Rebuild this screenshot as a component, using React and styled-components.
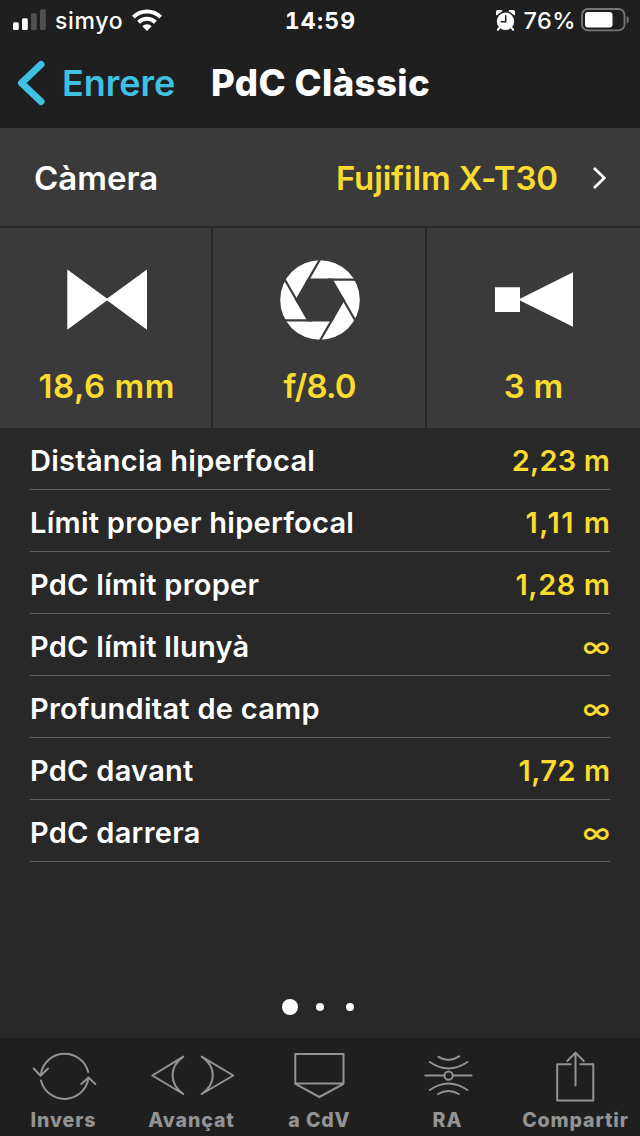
import React from "react";
import styled, { createGlobalStyle } from "styled-components";

const Global = createGlobalStyle`
  *, *::before, *::after { box-sizing: border-box; }
  html, body { margin: 0; padding: 0; background: #282828; }
  body { font-family: Inter, "Liberation Sans", sans-serif; color: #fff; }
  svg { display: block; flex: none; }
`;

const YELLOW = "#fadb2f";
const BLUE = "#3fc1e1";
const PANEL = "#3a3a3a";
const LINE = "#292929";

const Screen = styled.div`
  width: 640px;
  height: 1136px;
  display: flex;
  flex-direction: column;
  background: #282828;
  overflow: hidden;
`;

const Header = styled.header`
  height: 128px;
  background: #1f1f1f;
`;

const Text = styled.span`
  font-size: ${(p) => p.$size}px;
  font-weight: ${(p) => p.$weight || 600};
  letter-spacing: ${(p) => p.$track || 0}px;
  margin-right: ${(p) => -(p.$track || 0)}px;
  color: ${(p) => p.$color || "#fff"};
  font-variant-numeric: ${(p) => (p.$tabular ? "tabular-nums" : "normal")};
  line-height: 1.2;
  white-space: pre;
`;

const StatusBar = styled.div`
  height: 40px;
  display: grid;
  grid-template-columns: 1fr auto 1fr;
  align-items: center;
`;

const StatusText = styled(Text)`
  padding-top: 3px;
`;

const StatusLeft = styled.div`
  display: flex;
  align-items: center;
  padding-left: 13px;
  gap: 9px;
`;

const StatusRight = styled.div`
  display: flex;
  align-items: center;
  justify-content: flex-end;
  padding-right: 11px;
`;

const Percent = styled(StatusText)`
  margin: 0 5px 0 9px;
  padding-top: 2px;
`;

const NavBar = styled.div`
  height: 86px;
  display: flex;
  align-items: center;
  padding-left: 17px;
`;

const NavText = styled(Text)`
  padding-top: 1px;
`;

const BackButton = styled.div`
  display: flex;
  align-items: center;
  gap: 17px;
  width: 194px;
`;

const CameraRow = styled.div`
  height: 100px;
  display: flex;
  align-items: center;
  background: ${PANEL};
  border-bottom: 2px solid ${LINE};
  padding: 4px 33px 0 34px;
`;

const CameraName = styled.div`
  margin-left: auto;
  margin-right: 34px;
  display: flex;
`;

const Tiles = styled.div`
  height: 200px;
  display: grid;
  grid-template-columns: 213px 214px 213px;
  background: ${PANEL};
`;

const Tile = styled.div`
  display: flex;
  flex-direction: column;
  align-items: center;
  padding-top: 27px;
  padding-left: ${(p) => (p.$last ? 0 : 2)}px;
  gap: 22px;
  border-right: ${(p) => (p.$last ? "0" : `2px solid ${LINE}`)};
`;

const Results = styled.div`
  padding: 0 30px;
`;

const ResultRow = styled.div`
  height: 62px;
  display: flex;
  align-items: center;
  justify-content: space-between;
  padding-top: 5px;
  border-bottom: 1px solid #606060;
`;

const Pager = styled.div`
  margin-top: auto;
  height: 62px;
  display: flex;
  align-items: center;
  justify-content: center;
  gap: 22px;
  padding-right: 4px;
`;

const Dot = styled.i`
  width: ${(p) => (p.$active ? 16 : 8)}px;
  height: ${(p) => (p.$active ? 16 : 8)}px;
  border-radius: 50%;
  background: #fff;
  margin-right: ${(p) => (p.$active ? -4 : 0)}px;
`;

const TabBar = styled.nav`
  height: 98px;
  display: grid;
  grid-template-columns: repeat(5, 128px);
  background: #1f1f1f;
`;

const Tab = styled.div`
  display: flex;
  flex-direction: column;
  align-items: center;
  padding-top: 8px;
  gap: 3px;
`;

const TabLabel = styled(Text)`
  padding-right: 2px;
`;

const GREY = "#939393";

function Signal() {
  return (
    <svg width="33" height="22" viewBox="0 0 33 22">
      <rect x="0" y="13.2" width="5.8" height="7.8" rx="1.6" fill="#fff" />
      <rect x="9" y="9.2" width="5.8" height="11.8" rx="1.6" fill="#fff" />
      <rect x="18" y="4.2" width="5.8" height="16.8" rx="1.6" fill="#505050" />
      <rect x="27" y="0.2" width="5.8" height="20.8" rx="1.6" fill="#505050" />
    </svg>
  );
}

function Wifi() {
  return (
    <svg width="30" height="22" viewBox="0 0 30 22">
      <g fill="none" stroke="#fff" strokeWidth="4">
        <path d="M1.4 8.2 A19.3 19.3 0 0 1 28.6 8.2" />
        <path d="M6.6 13.2 A12 12 0 0 1 23.4 13.2" />
      </g>
      <path d="M15 22 L10.3 17.2 A6.8 6.8 0 0 1 19.7 17.2 Z" fill="#fff" />
    </svg>
  );
}

function Alarm() {
  return (
    <svg width="19" height="21" viewBox="0 0 19 21">
      <circle cx="9.5" cy="11.3" r="8.7" fill="#fff" />
      <path
        d="M0.4 5.4 A3.6 3.6 0 0 1 6.6 1 Z M18.6 5.4 A3.6 3.6 0 0 0 12.4 1 Z"
        fill="#fff"
      />
      <path d="M3.6 17.5 L1.8 19.8 M15.4 17.5 L17.2 19.8" stroke="#fff" strokeWidth="2" strokeLinecap="round" />
      <path d="M9.7 5.8 V11.8 H5.3" fill="none" stroke="#1f1f1f" strokeWidth="1.5" strokeLinecap="round" />
    </svg>
  );
}

function Battery() {
  return (
    <svg width="48" height="24" viewBox="0 0 48 24">
      <rect x="1" y="1" width="42.5" height="21.4" rx="6" fill="none" stroke="#767676" strokeWidth="1.9" />
      <rect x="4" y="4" width="27.5" height="15.4" rx="3" fill="#fff" />
      <path d="M45.7 8 Q48 9.5 48 11.8 Q48 14 45.7 15.5 Z" fill="#767676" />
    </svg>
  );
}

function Aperture() {
  return (
    <svg width="90" height="90" viewBox="-45 -45 90 90">
      <circle r="39.8" fill="#fff" />
      <polygon points="-12.4,-21.5 12.4,-21.5 24.8,0 12.4,21.5 -12.4,21.5 -24.8,0" fill={PANEL} />
      {[0, 60, 120, 180, 240, 300].map((a) => (
        <path key={a} d="M-42 20.3 H-8" stroke={PANEL} strokeWidth="2.2" transform={`rotate(${a})`} />
      ))}
    </svg>
  );
}

function Bowtie() {
  return (
    <svg width="90" height="90" viewBox="0 0 90 90">
      <path d="M5.3 14.6 L44.6 43.2 H45.6 L85 14.6 V74.7 L45.6 45.8 H44.6 L5.3 74.7 Z" fill="#fff" />
    </svg>
  );
}

function Subject() {
  return (
    <svg width="90" height="90" viewBox="0 0 90 90">
      <path d="M6 32.2 H31 V43.7 L84 17.3 V71.8 L31 45.5 V57 H6 Z" fill="#fff" />
    </svg>
  );
}

const tabs = [
  {
    label: "Invers",
    art: (
      <>
        <path d="M40.8 28.5 A24.2 24.2 0 0 1 88.2 26 M41 34.5 A24.2 24.2 0 0 0 88.4 32.5" />
        <path d="M33.7 22.5 L40.5 29.7 L48 22.5 M81.3 38 L88.5 31.5 L95.3 38" />
      </>
    ),
  },
  {
    label: "Avançat",
    art: (
      <>
        <path d="M55.3 10.6 L24.3 29.5 L55.3 48 C41 38 41 20.5 55.3 10.6 Z" />
        <path d="M73.7 10.6 L105.3 29.5 L73.7 48 C88.5 38 88.5 20.5 73.7 10.6 Z" />
      </>
    ),
  },
  {
    label: "a CdV",
    art: <path d="M39.3 8 H87.5 V37.8 L63.4 51 L39.3 37.8 Z M39.3 37.6 H87.5" />,
  },
  {
    label: "RA",
    art: (
      <>
        <circle cx="64.6" cy="29.6" r="4.2" />
        <path d="M41.3 29.6 H60.4 M68.8 29.6 H87.6" />
        <path d="M54.5 10.8 Q64.6 17.2 75.2 10.4 M45.8 16 Q64.6 28.8 83.4 16" />
        <path d="M45.8 44 Q64.6 30.8 83.4 44 M54 48 Q64.6 41.8 74.7 48" />
      </>
    ),
  },
  {
    label: "Compartir",
    art: (
      <>
        <path d="M58.7 18.2 H45.2 V54.5 H81.3 V18.2 H68.3" />
        <path d="M63.5 39.5 V6.8 M55.3 15 L63.5 6.6 L71.7 15" />
      </>
    ),
  },
];

const results = [
  { label: "Distància hiperfocal", value: "2,23 m", track: 0.2 },
  { label: "Límit proper hiperfocal", value: "1,11 m", track: 1.5 },
  { label: "PdC límit proper", value: "1,28 m", track: 0.6 },
  { label: "PdC límit llunyà", value: "∞", weight: 500 },
  { label: "Profunditat de camp", value: "∞", weight: 500 },
  { label: "PdC davant", value: "1,72 m", track: 0.5 },
  { label: "PdC darrera", value: "∞", weight: 500 },
];

const tiles = [
  { icon: <Bowtie />, value: "18,6 mm", track: 0.5 },
  { icon: <Aperture />, value: "f/8.0", track: -0.9 },
  { icon: <Subject />, value: "3 m", track: 0.3 },
];

export default function App() {
  return (
    <Screen>
      <Global />
      <Header>
        <StatusBar>
          <StatusLeft>
            <Signal />
            <StatusText $size={23} $weight={500} $track={0.7}>simyo</StatusText>
            <Wifi />
          </StatusLeft>
          <StatusText $size={23} $weight={700} $track={1.2} $tabular>14:59</StatusText>
          <StatusRight>
            <Alarm />
            <Percent $size={23.5} $weight={500} $track={0.4}>76%</Percent>
            <Battery />
          </StatusRight>
        </StatusBar>
        <NavBar>
          <BackButton>
            <svg width="28" height="46" viewBox="0 0 28 46">
              <path d="M24 4.5 L4.5 23 L24 41.5" fill="none" stroke={BLUE} strokeWidth="7" strokeLinecap="round" strokeLinejoin="round" />
            </svg>
            <NavText $size={36} $color={BLUE}>Enrere</NavText>
          </BackButton>
          <NavText $size={36.5} $weight={800} $track={0.4}>PdC Clàssic</NavText>
        </NavBar>
      </Header>

      <CameraRow>
        <Text $size={33}>Càmera</Text>
        <CameraName>
          <Text $size={33} $track={-0.15} $color={YELLOW}>Fujifilm X-T30</Text>
        </CameraName>
        <svg width="15" height="24" viewBox="0 0 15 24">
          <path d="M2 1 L12.3 11 L2 21" fill="none" stroke="#fff" strokeWidth="2.7" />
        </svg>
      </CameraRow>

      <Tiles>
        {tiles.map((t, i) => (
          <Tile key={t.value} $last={i === 2}>
            {t.icon}
            <Text $size={33} $color={YELLOW} $track={t.track}>{t.value}</Text>
          </Tile>
        ))}
      </Tiles>

      <Results>
        {results.map((r) => (
          <ResultRow key={r.label}>
            <Text $size={29} $track={0.26}>{r.label}</Text>
            <Text $size={29} $color={YELLOW} $track={r.track} $weight={r.weight}>{r.value}</Text>
          </ResultRow>
        ))}
      </Results>

      <Pager>
        <Dot $active />
        <Dot />
        <Dot />
      </Pager>

      <TabBar>
        {tabs.map((t) => (
          <Tab key={t.label}>
            <svg width="128" height="60" viewBox="0 0 128 60" fill="none" stroke={GREY} strokeWidth="2" strokeLinecap="round" strokeLinejoin="round">
              {t.art}
            </svg>
            <TabLabel $size={19.5} $weight={800} $track={0.9} $color={GREY}>{t.label}</TabLabel>
          </Tab>
        ))}
      </TabBar>
    </Screen>
  );
}
